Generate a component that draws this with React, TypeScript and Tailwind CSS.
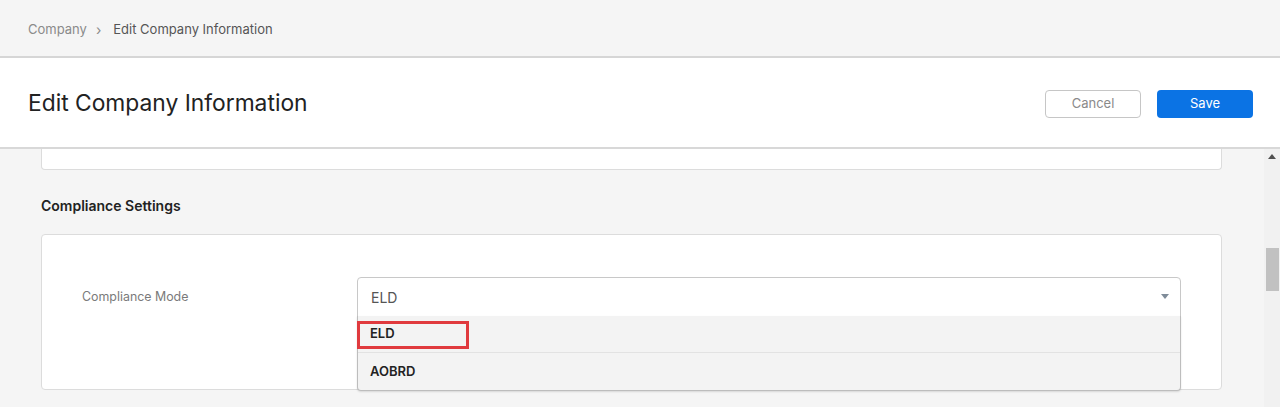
import React from "react";

export default function App() {
  return (
    <div
      className="w-[1280px] h-[407px] overflow-hidden flex flex-col bg-[#f5f5f5] text-[#222]"
      style={{ fontFamily: "Inter, 'Noto Sans', sans-serif" }}
    >
      {/* Breadcrumb bar */}
      <div className="h-[58px] shrink-0 flex items-center pt-[4px] px-[28px] bg-[#f5f5f5] border-b-2 border-[#d6d6d6] text-[13px]">
        <span className="text-[#8a8a8a]">Company</span>
        <span className="ml-[9px] mr-[12px] text-[#8a8a8a] text-[14px] leading-none">›</span>
        <span className="text-[#555]">Edit Company Information</span>
      </div>

      {/* Title bar */}
      <div className="h-[91px] shrink-0 bg-white border-b-2 border-[#d8d8d8] flex items-center justify-between pl-[28px] pr-[27px]">
        <h1 className="text-[22.8px] text-[#222] font-normal leading-none mt-[2px]">Edit Company Information</h1>
        <div className="flex items-center gap-[16px] mt-[2px]">
          <button className="w-[96px] h-[28px] rounded-[4px] border border-[#c6c6c6] bg-white text-[13px] text-[#8a8a8a]">
            Cancel
          </button>
          <button className="w-[96px] h-[28px] rounded-[4px] bg-[#0b73e4] text-[13px] text-white">
            Save
          </button>
        </div>
      </div>

      {/* Content + scrollbar */}
      <div className="flex flex-1 min-h-0">
        <div className="flex-1 pl-[41px] pr-[42px]">
          {/* previous card, bottom visible */}
          <div className="h-[21px] bg-white border border-t-0 border-[#dcdcdc] rounded-b-[4px]" />

          <div className="mt-[27px] text-[14px] font-semibold text-[#222] leading-[18px]">
            Compliance Settings
          </div>

          <div className="mt-[19px] h-[156px] bg-white border border-[#dcdcdc] rounded-[4px] pt-[42px] px-[40px]">
            <div className="flex items-start">
              <div className="w-[275px] shrink-0 h-[40px] flex items-center text-[12.4px] text-[#7a7a7a]">
                Compliance Mode
              </div>
              <div className="relative flex-1">
                <div className="h-[40px] border border-[#c8c8c8] rounded-t-[4px] flex items-center justify-between pl-[13px] pr-[11px] bg-white">
                  <span className="text-[14px] text-[#555]">ELD</span>
                  <svg width="8" height="6" viewBox="0 0 8 6">
                    <path d="M0 0 H8 L4 5 Z" fill="#7f8c99" />
                  </svg>
                </div>
                <div className="absolute left-0 right-0 top-[39px] border border-[#bdbdbd] border-t-0 rounded-b-[4px] bg-[#f3f3f3] shadow-[0_1px_2px_rgba(0,0,0,0.12)]">
                  <div className="relative h-[37px] flex items-center pl-[12px] text-[13px] font-semibold text-[#222] border-b border-[#e2e2e2]">
                    ELD
                    <div className="absolute left-[-1px] top-[5px] w-[112px] h-[28px] border-[3px] border-[#e03a3e]" />
                  </div>
                  <div className="h-[37px] flex items-center pl-[12px] text-[13px] font-semibold text-[#222]">
                    AOBRD
                  </div>
                </div>
              </div>
            </div>
          </div>
        </div>

        {/* Scrollbar */}
        <div className="w-[16px] shrink-0 bg-[#f1f1f1] flex flex-col items-center">
          <svg className="mt-[5px]" width="8" height="5" viewBox="0 0 8 5">
            <path d="M0 5 L4 0 L8 5 Z" fill="#505050" />
          </svg>
          <div className="mt-[89px] w-[13px] h-[43px] bg-[#c1c1c1]" />
        </div>
      </div>
    </div>
  );
}
